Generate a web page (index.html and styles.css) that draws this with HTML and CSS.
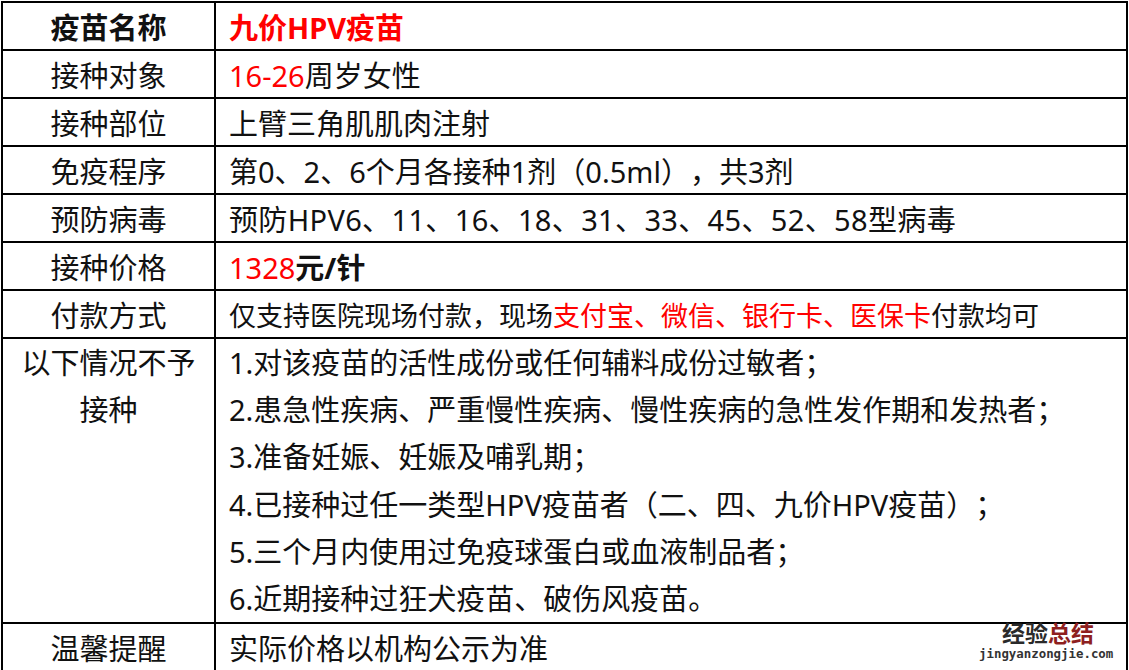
FILE: index.html
```html
<!DOCTYPE html>
<html lang="zh-CN">
<head>
<meta charset="utf-8">
<title>九价HPV疫苗</title>
<link rel="stylesheet" href="styles.css">
</head>
<body>
<div class="page">
  <table class="info">
    <colgroup><col class="c1"><col class="c2"></colgroup>
    <tr class="row">
      <th class="label bold">疫苗名称</th>
      <td class="val bold red">九价HPV疫苗</td>
    </tr>
    <tr class="row">
      <th class="label">接种对象</th>
      <td class="val"><span class="red">16-26</span>周岁女性</td>
    </tr>
    <tr class="row">
      <th class="label">接种部位</th>
      <td class="val">上臂三角肌肌肉注射</td>
    </tr>
    <tr class="row">
      <th class="label">免疫程序</th>
      <td class="val">第0、2、6个月各接种1剂（0.5ml），共3剂</td>
    </tr>
    <tr class="row">
      <th class="label">预防病毒</th>
      <td class="val loose">预防HPV6、11、16、18、31、33、45、52、58型病毒</td>
    </tr>
    <tr class="row">
      <th class="label">接种价格</th>
      <td class="val"><span class="red">1328</span><span class="bold">元/针</span></td>
    </tr>
    <tr class="row">
      <th class="label">付款方式</th>
      <td class="val small">仅支持医院现场付款，现场<span class="red">支付宝、微信、银行卡、医保卡</span>付款均可</td>
    </tr>
    <tr class="row tall">
      <th class="label multi">以下情况不予<br>接种</th>
      <td class="val multi">
        <div>1.对该疫苗的活性成份或任何辅料成份过敏者；</div>
        <div>2.患急性疾病、严重慢性疾病、慢性疾病的急性发作期和发热者；</div>
        <div>3.准备妊娠、妊娠及哺乳期；</div>
        <div>4.已接种过任一类型HPV疫苗者（二、四、九价HPV疫苗）；</div>
        <div>5.三个月内使用过免疫球蛋白或血液制品者；</div>
        <div>6.近期接种过狂犬疫苗、破伤风疫苗。</div>
      </td>
    </tr>
    <tr class="row">
      <th class="label">温馨提醒</th>
      <td class="val">实际价格以机构公示为准</td>
    </tr>
  </table>
  <div class="watermark">
    <div class="wm-title"><span class="wm-dark">经验</span><span class="wm-red">总结</span></div>
    <div class="wm-url">jingyanzongjie.com</div>
  </div>
</div>
</body>
</html>
```
FILE: styles.css
```css
html, body {
  margin: 0;
  padding: 0;
  background: #ffffff;
}

.page {
  position: relative;
  width: 1129px;
  height: 670px;
  font-family: "Noto Sans", "Noto Sans CJK SC", sans-serif;
  color: #111111;
  text-spacing-trim: space-all;
}

.info {
  border-collapse: collapse;
  table-layout: fixed;
  width: 1127px;
  margin: 1px 0 0 1px;
}

.c1 { width: 213px; }

.info th,
.info td {
  border: 2px solid #000000;
  padding: 0;
  font-size: 29px;
  font-weight: normal;
  line-height: 1;
}

.row { height: 48px; }

.info .label {
  text-align: center;
  vertical-align: middle;
  padding: 3px 0 0 0;
}

.info .val {
  text-align: left;
  vertical-align: middle;
  padding: 3px 0 0 13px;
}

.info .loose { letter-spacing: 0.35px; }

.info .bold,
.bold { font-weight: bold; }

.red { color: #ff0000; }

.info .small { font-size: 27px; }

.tall { height: 283px; }

.info .multi {
  vertical-align: top;
  line-height: 47.2px;
  padding-top: 0;
}

.watermark {
  position: absolute;
  left: 979px;
  top: 620px;
  width: 134px;
  text-align: center;
}

.wm-title {
  font-family: "Noto Sans CJK SC", sans-serif;
  font-weight: bold;
  font-size: 23px;
  line-height: 23px;
  height: 23px;
  padding-left: 4px;
}

.wm-dark { color: #2a2a2a; }
.wm-red { color: #8e1f1f; }

.wm-url {
  margin-top: 3px;
  font-family: "DejaVu Sans Mono", monospace;
  font-size: 12.4px;
  line-height: 14px;
  height: 14px;
  color: #333333;
  font-weight: bold;
}
```
